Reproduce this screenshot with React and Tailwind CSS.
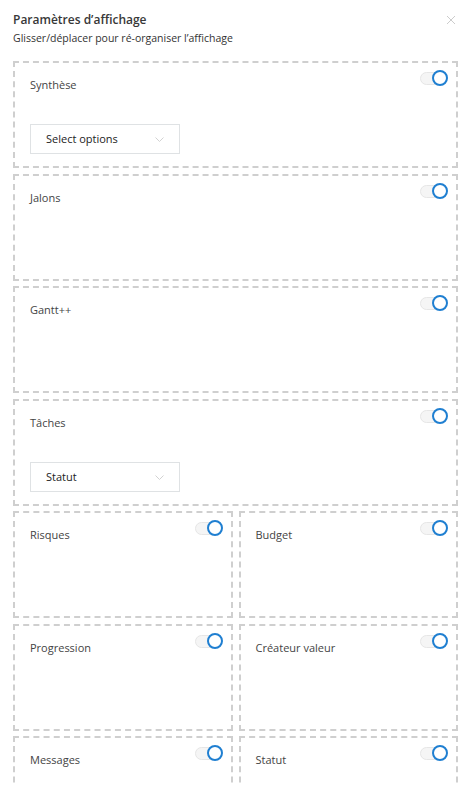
import React from "react";

function Toggle() {
  return (
    <div className="absolute right-[8px] top-[7px] w-[28px] h-[16px]">
      <div className="absolute left-0 top-[2px] w-[26px] h-[13px] rounded-full bg-[#f5f5f5] border border-[#e6e6e6]" />
      <div className="absolute right-0 top-0 w-[16px] h-[16px] rounded-full bg-white border-[2.5px] border-[#1f7fd1]" />
    </div>
  );
}

function Chevron() {
  return (
    <svg width="9" height="5" viewBox="0 0 9 5" fill="none" className="absolute right-[15px] top-[12px]">
      <path d="M0.5 0.5 L4.5 4.5 L8.5 0.5" stroke="#cdcdcd" strokeWidth="0.9" />
    </svg>
  );
}

function Box({ label, select }) {
  return (
    <div className="relative h-[107px] border-2 border-dashed border-[#cfcfcf] pl-[15px] pt-[14px]">
      <div className="text-[11px] leading-[16px] text-[#444]">{label}</div>
      <Toggle />
      {select && (
        <div className="relative mt-[31px] w-[150px] h-[30px] border border-[#dfe2e4] pl-[15px] text-[11px] leading-[28px] text-[#222]">
          {select}
          <Chevron />
        </div>
      )}
    </div>
  );
}

export default function App() {
  return (
    <div className="w-[468px] h-[786px] bg-white overflow-hidden" style={{ fontFamily: '"Open Sans", sans-serif' }}>
      <div className="relative pl-[13px] pt-[11px]">
        <div className="text-[12px] leading-[18px] font-semibold text-[#383838]">Paramètres d’affichage</div>
        <div className="text-[10.5px] leading-[16px] text-[#333] mt-[1px]">Glisser/déplacer pour ré-organiser l’affichage</div>
        <svg width="10" height="10" viewBox="0 0 10 10" className="absolute right-[12px] top-[15px]">
          <path d="M1 1 L9 9 M9 1 L1 9" stroke="#cccccc" strokeWidth="1" />
        </svg>
      </div>
      <div className="ml-[13px] w-[445px] mt-[15px] flex flex-col gap-[5.5px]">
        <Box label="Synthèse" select="Select options" />
        <Box label="Jalons" />
        <Box label="Gantt++" />
        <Box label="Tâches" select="Statut" />
        <div className="grid grid-cols-2 gap-x-[6px] gap-y-[5.5px]">
          <Box label="Risques" />
          <Box label="Budget" />
          <Box label="Progression" />
          <Box label="Créateur valeur" />
          <Box label="Messages" />
          <Box label="Statut" />
        </div>
      </div>
    </div>
  );
}
